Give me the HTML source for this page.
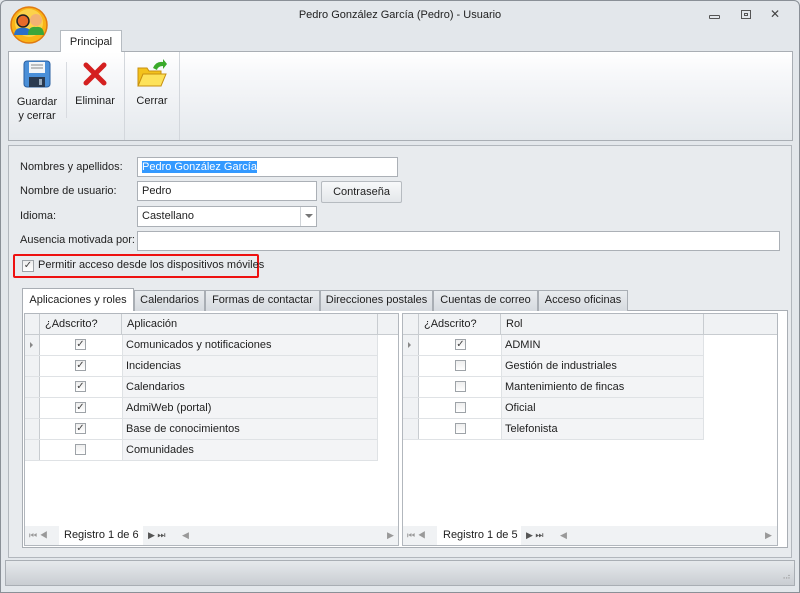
<!DOCTYPE html>
<html><head><meta charset="utf-8"><style>
*{box-sizing:border-box;margin:0;padding:0}
body{width:800px;height:593px;overflow:hidden;background:#e3e7eb;font-family:"Liberation Sans",sans-serif;font-size:11px;color:#1e1e1e;position:relative;white-space:nowrap}
.a{position:absolute}
.win{left:0;top:0;width:800px;height:593px;border:1px solid #8a9097;border-radius:6px 6px 0 0;background:#e3e7eb}
.inp{background:#fff;border:1px solid #abb0b6;padding:3px 4px;line-height:13px}
.lbl{left:20px;color:#222}
.tab{top:290px;height:21px;border:1px solid #a9aeb4;border-bottom:none;background:linear-gradient(#e9ecef,#d6dadf);text-align:center;line-height:19px}
.cb{width:11px;height:11px;border:1px solid #9ea3a8;background:linear-gradient(#eee,#fff);font-size:10px;line-height:9px;text-align:center;color:#444}
.hd{background:#f0f2f4;border-right:1px solid #c8ccd0;border-bottom:1px solid #c8ccd0;height:21px;line-height:20px;padding-left:5px}
.row{height:21px;border-bottom:1px solid #dfe2e5}
</style></head><body>
<div class="a win"></div>
<svg class="a" style="left:9px;top:5px" width="40" height="40" viewBox="0 0 40 40">
<circle cx="20" cy="20" r="18" fill="#f9b418" stroke="#e07a10" stroke-width="1.5"/>
<circle cx="20" cy="18" r="14" fill="#fcd24a"/>
<circle cx="14" cy="16" r="6" fill="#e86a2a" stroke="#222" stroke-width="1.5"/>
<path d="M5 30 Q6 22 14 23 Q22 22 22 30 Z" fill="#2a6fc8"/>
<circle cx="27" cy="15" r="6" fill="#f2b273"/>
<path d="M19 30 Q19 21 27 22 Q35 21 35 30 Z" fill="#3aa63a"/>
</svg>
<div class="a" style="left:0;top:9px;width:800px;text-align:center">Pedro González García (Pedro) - Usuario</div>
<div class="a" style="left:709px;top:15px;width:11px;height:4px;border:1px solid #555;border-radius:1px"></div>
<div class="a" style="left:741px;top:10px;width:10px;height:9px;border:1px solid #555"><div style="margin:2px;height:3px;border:1px solid #555"></div></div>
<div class="a" style="left:770px;top:7px;font-size:12px;color:#444">✕</div>
<div class="a" style="left:60px;top:30px;width:62px;height:22px;background:#fff;border:1px solid #b5bbc1;border-bottom:none;text-align:center;line-height:22px;z-index:2">Principal</div>
<div class="a" style="left:8px;top:51px;width:785px;height:90px;border:1px solid #a9aeb4;background:linear-gradient(#fff,#f7f8fa 25%,#e5e9ed)"></div>
<div class="a" style="left:66px;top:62px;width:1px;height:56px;background:#d8dbe0"></div>
<div class="a" style="left:124px;top:52px;width:1px;height:88px;background:#d3d7dc"></div>
<div class="a" style="left:179px;top:52px;width:1px;height:88px;background:#d3d7dc"></div>
<svg class="a" style="left:23px;top:60px" width="28" height="28" viewBox="0 0 28 28"><rect x="1" y="1" width="26" height="26" rx="3" fill="#4a8fd8" stroke="#2a5fa0"/><rect x="6" y="2" width="16" height="11" fill="#f4f6f8"/><path d="M8 5h12M8 8h12" stroke="#888"/><rect x="6" y="17" width="16" height="10" fill="#2a3a50"/><rect x="16" y="19" width="3" height="6" fill="#9ab"/></svg>
<svg class="a" style="left:83px;top:62px" width="24" height="24" viewBox="0 0 24 24"><path d="M3 3L21 21M21 3L3 21" stroke="#d42020" stroke-width="5" stroke-linecap="round"/></svg>
<svg class="a" style="left:136px;top:58px" width="32" height="32" viewBox="0 0 32 32"><path d="M2 10h9l2 3h12v15H2z" fill="#f3c21c" stroke="#c89010"/><path d="M2 28l5-12h23l-5 12z" fill="#fde25a" stroke="#c89010"/><path d="M17 10Q20 3 27 4l0-3 4 5-4 5 0-3Q22 8 21 12z" fill="#3aaa2a"/></svg>
<div class="a" style="left:10px;top:95px;width:54px;text-align:center;line-height:14px">Guardar<br>y cerrar</div>
<div class="a" style="left:67px;top:95px;width:56px;text-align:center">Eliminar</div>
<div class="a" style="left:125px;top:95px;width:54px;text-align:center">Cerrar</div>
<div class="a" style="left:8px;top:145px;width:784px;height:413px;border:1px solid #b2b7bd;background:#e8ebee"></div>
<div class="a lbl" style="top:161px">Nombres y apellidos:</div>
<div class="a inp" style="left:137px;top:157px;width:261px;height:20px"><span style="background:#3399ff;color:#fff">Pedro González García</span></div>
<div class="a lbl" style="top:185px">Nombre de usuario:</div>
<div class="a inp" style="left:137px;top:181px;width:180px;height:20px">Pedro</div>
<div class="a" style="left:321px;top:181px;width:81px;height:22px;border:1px solid #b6bbc0;border-radius:2px;background:linear-gradient(#f8f9fa,#e4e7ea);text-align:center;line-height:20px">Contraseña</div>
<div class="a lbl" style="top:210px">Idioma:</div>
<div class="a inp" style="left:137px;top:206px;width:180px;height:21px">Castellano</div>
<div class="a" style="left:300px;top:207px;width:1px;height:19px;background:#d0d4d8"></div>
<div class="a" style="left:305px;top:214px;border-left:4px solid transparent;border-right:4px solid transparent;border-top:4px solid #777"></div>
<div class="a lbl" style="top:234px">Ausencia motivada por:</div>
<div class="a inp" style="left:137px;top:231px;width:643px;height:20px"></div>
<div class="a" style="left:13px;top:254px;width:246px;height:24px;border:2px solid #e11;border-radius:2px"></div>
<div class="a cb" style="left:22px;top:260px;width:12px;height:12px">✓</div>
<div class="a" style="left:38px;top:259px">Permitir acceso desde los dispositivos móviles</div>
<div class="a" style="left:22px;top:310px;width:766px;height:238px;border:1px solid #a9aeb4;background:#fff"></div>
<div class="a tab" style="left:22px;top:288px;width:112px;height:23px;background:#fff;z-index:2;line-height:22px">Aplicaciones y roles</div>
<div class="a tab" style="left:134px;width:71px">Calendarios</div>
<div class="a tab" style="left:205px;width:115px">Formas de contactar</div>
<div class="a tab" style="left:320px;width:113px">Direcciones postales</div>
<div class="a tab" style="left:433px;width:105px">Cuentas de correo</div>
<div class="a tab" style="left:538px;width:90px">Acceso oficinas</div>
<div class="a" style="left:24px;top:313px;width:375px;height:233px;border:1px solid #b2b7bd;background:#fff">
 <div class="a" style="left:0;top:0;width:373px;height:21px;background:#f0f2f4;border-bottom:1px solid #c8ccd0"></div>
 <div class="a hd" style="left:0;top:0;width:15px"></div>
 <div class="a hd" style="left:15px;top:0;width:82px">¿Adscrito?</div>
 <div class="a hd" style="left:97px;top:0;width:256px">Aplicación</div>
 <div class="a" style="left:0;top:21px;width:15px;height:126px;background:#f0f2f4;border-right:1px solid #c8ccd0"></div>
 <div class="a" style="left:97px;top:21px;width:256px;height:126px;background:#f3f4f6;border-right:1px solid #dfe2e5;border-left:1px solid #dfe2e5"></div>
 <div class="a" style="left:0;top:21px;width:353px">
  <div class="row" style="position:relative"><span class="a" style="left:5px;top:7px;border-top:3px solid transparent;border-bottom:3px solid transparent;border-left:3px solid #888"></span><span class="a cb" style="left:50px;top:4px">✓</span><span class="a" style="left:101px;top:4px">Comunicados y notificaciones</span></div>
  <div class="row" style="position:relative"><span class="a cb" style="left:50px;top:4px">✓</span><span class="a" style="left:101px;top:4px">Incidencias</span></div>
  <div class="row" style="position:relative"><span class="a cb" style="left:50px;top:4px">✓</span><span class="a" style="left:101px;top:4px">Calendarios</span></div>
  <div class="row" style="position:relative"><span class="a cb" style="left:50px;top:4px">✓</span><span class="a" style="left:101px;top:4px">AdmiWeb (portal)</span></div>
  <div class="row" style="position:relative"><span class="a cb" style="left:50px;top:4px">✓</span><span class="a" style="left:101px;top:4px">Base de conocimientos</span></div>
  <div class="row" style="position:relative"><span class="a cb" style="left:50px;top:4px"></span><span class="a" style="left:101px;top:4px">Comunidades</span></div>
 </div>
 <div class="a" style="left:0;top:212px;width:373px;height:19px;background:#f0f2f4;color:#999;font-size:9px;line-height:19px">
  <span class="a" style="left:4px">⏮ ◀</span><span class="a" style="left:34px;width:84px;height:19px;background:#fff;color:#1e1e1e;font-size:11px;padding-left:5px">Registro 1 de 6</span><span class="a" style="left:123px;color:#555">▶ ⏭</span><span class="a" style="left:157px">◀</span><span class="a" style="left:362px">▶</span>
 </div>
</div>
<div class="a" style="left:402px;top:313px;width:376px;height:233px;border:1px solid #b2b7bd;background:#fff">
 <div class="a" style="left:0;top:0;width:374px;height:21px;background:#f0f2f4;border-bottom:1px solid #c8ccd0"></div>
 <div class="a hd" style="left:0;top:0;width:16px"></div>
 <div class="a hd" style="left:16px;top:0;width:82px">¿Adscrito?</div>
 <div class="a hd" style="left:98px;top:0;width:203px">Rol</div>
 <div class="a" style="left:0;top:21px;width:16px;height:105px;background:#f0f2f4;border-right:1px solid #c8ccd0"></div>
 <div class="a" style="left:98px;top:21px;width:203px;height:105px;background:#f3f4f6;border-right:1px solid #dfe2e5;border-left:1px solid #dfe2e5"></div>
 <div class="a" style="left:0;top:21px;width:301px">
  <div class="row" style="position:relative"><span class="a" style="left:5px;top:7px;border-top:3px solid transparent;border-bottom:3px solid transparent;border-left:3px solid #888"></span><span class="a cb" style="left:52px;top:4px">✓</span><span class="a" style="left:102px;top:4px">ADMIN</span></div>
  <div class="row" style="position:relative"><span class="a cb" style="left:52px;top:4px"></span><span class="a" style="left:102px;top:4px">Gestión de industriales</span></div>
  <div class="row" style="position:relative"><span class="a cb" style="left:52px;top:4px"></span><span class="a" style="left:102px;top:4px">Mantenimiento de fincas</span></div>
  <div class="row" style="position:relative"><span class="a cb" style="left:52px;top:4px"></span><span class="a" style="left:102px;top:4px">Oficial</span></div>
  <div class="row" style="position:relative"><span class="a cb" style="left:52px;top:4px"></span><span class="a" style="left:102px;top:4px">Telefonista</span></div>
 </div>
 <div class="a" style="left:0;top:212px;width:374px;height:19px;background:#f0f2f4;color:#999;font-size:9px;line-height:19px">
  <span class="a" style="left:4px">⏮ ◀</span><span class="a" style="left:34px;width:84px;height:19px;background:#fff;color:#1e1e1e;font-size:11px;padding-left:6px">Registro 1 de 5</span><span class="a" style="left:123px;color:#555">▶ ⏭</span><span class="a" style="left:157px">◀</span><span class="a" style="left:362px">▶</span>
 </div>
</div>
<div class="a" style="left:5px;top:560px;width:790px;height:26px;border:1px solid #a9aeb4;background:linear-gradient(#e6e9ec,#c9cdd2)"></div>
<div class="a" style="left:780px;top:572px;font-size:8px;color:#999;letter-spacing:-1px">⠠⠴</div>
</body></html>
